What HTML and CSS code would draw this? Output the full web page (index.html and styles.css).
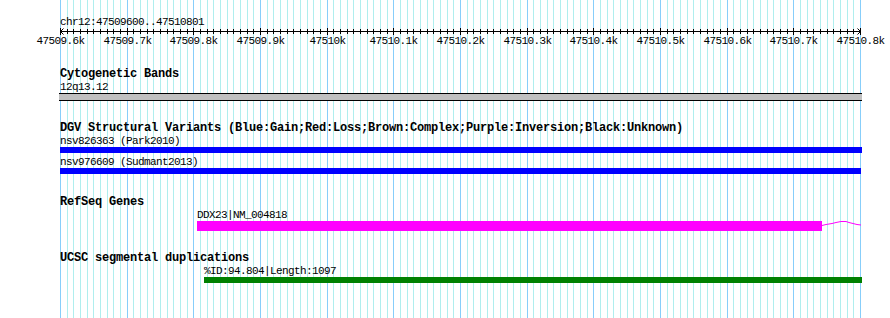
FILE: index.html
```html
<!DOCTYPE html>
<html lang="en">
<head>
  <meta charset="UTF-8">
  <meta name="viewport" content="width=device-width, initial-scale=1.0">
  <title>chr12:47509600..47510801</title>
  <link rel="stylesheet" href="styles.css">
</head>
<body>
  <div class="panel">
    <!-- background grid, filled in by the script below -->
    <svg class="grid" width="890" height="318"></svg>

    <svg class="ruler" width="890" height="47">
      <text class="ruler-text" x="60" y="25">chr12:47509600..47510801</text>
      <line class="axis" x1="60" y1="31.5" x2="861" y2="31.5"/>
      <polyline class="arrow" points="63.5,28.5 60.5,31.5 63.5,34.5"/>
      <polyline class="arrow" points="857.5,28.5 860.5,31.5 857.5,34.5"/>
      <g class="ticks"></g>
    </svg>

    <section class="track">
      <h2 class="track-title">Cytogenetic Bands</h2>
      <div class="feature">
        <div class="feature-label" style="margin-left:60px">12q13.12</div>
        <div class="bar bar-band" style="margin-left:59px;width:803px"></div>
      </div>
    </section>

    <section class="track">
      <h2 class="track-title">DGV Structural Variants (Blue:Gain;Red:Loss;Brown:Complex;Purple:Inversion;Black:Unknown)</h2>
      <div class="feature">
        <div class="feature-label" style="margin-left:60px">nsv826363 (Park2010)</div>
        <div class="bar bar-gain" style="margin-left:60px;width:802px"></div>
      </div>
      <div class="feature">
        <div class="feature-label" style="margin-left:60px">nsv976609 (Sudmant2013)</div>
        <div class="bar bar-gain" style="margin-left:60px;width:801px"></div>
      </div>
    </section>

    <section class="track track-genes">
      <h2 class="track-title">RefSeq Genes</h2>
      <div class="feature">
        <div class="feature-label" style="margin-left:197px">DDX23|NM_004818</div>
        <div class="gene-row">
          <div class="bar bar-exon" style="margin-left:197px;width:625px"></div>
          <svg class="intron" width="40" height="10">
            <polyline points="0,4.5 4,3.5 10,2.5 14,1.5 19,0.5 24,0.5 27,1.5 31,2.5 35,3.5 39,4"/>
          </svg>
        </div>
      </div>
    </section>

    <section class="track">
      <h2 class="track-title">UCSC segmental duplications</h2>
      <div class="feature">
        <div class="feature-label" style="margin-left:204px">%ID:94.804|Length:1097</div>
        <div class="bar bar-segdup" style="margin-left:204px;width:658px"></div>
      </div>
    </section>
  </div>

  <script>
    // Scale: 1200 bp shown across 800 px, starting at x = 60
    const NS = 'http://www.w3.org/2000/svg';
    const grid = document.querySelector('.grid');
    const ticks = document.querySelector('.ticks');
    const start = 47509600;
    const left = 60;
    const pxPerBp = 800 / 1200;

    function addLine(parent, cls, x, y1, y2) {
      const l = document.createElementNS(NS, 'line');
      l.setAttribute('class', cls);
      l.setAttribute('x1', x);
      l.setAttribute('x2', x);
      l.setAttribute('y1', y1);
      l.setAttribute('y2', y2);
      parent.appendChild(l);
    }

    for (let i = 0; i <= 120; i++) {
      const x = Math.round(left + i * 10 * pxPerBp) + 0.5;
      const major = i % 10 === 0;
      addLine(grid, major ? 'major' : 'minor', x, 0, 318);
      addLine(ticks, 'tick', x, major ? 28 : 29, major ? 35 : 34);

      if (major) {
        const t = document.createElementNS(NS, 'text');
        t.setAttribute('class', 'ruler-text');
        t.setAttribute('x', x);
        t.setAttribute('y', 44);
        t.setAttribute('text-anchor', 'middle');
        t.textContent = Number(((start + i * 10) / 1000).toFixed(1)) + 'k';
        ticks.appendChild(t);
      }
    }
  </script>
</body>
</html>
```

FILE: styles.css
```css
body {
  margin: 0;
  background: #fff;
}

.panel {
  position: relative;
  isolation: isolate;
  width: 890px;
  height: 318px;
  overflow: hidden;
  font-family: "Liberation Mono", "DejaVu Sans Mono", monospace;
  color: #000;
}

.grid {
  position: absolute;
  left: 0;
  top: 0;
  z-index: -1;
}

.grid line {
  stroke-width: 1;
  shape-rendering: crispEdges;
}

.grid .minor {
  stroke: #afeeee;
}

.grid .major {
  stroke: #87cefa;
}

.ruler {
  display: block;
}

.ruler-text {
  font-family: "Liberation Mono", monospace;
  font-size: 11px;
  letter-spacing: -0.6px;
  fill: #000;
}

.axis,
.tick {
  stroke: #000;
  stroke-width: 1;
  shape-rendering: crispEdges;
}

.arrow {
  stroke: #000;
  fill: none;
}

.track {
  margin-top: 21px;
}

.track-genes {
  margin-top: 22px;
}

.track-title {
  margin: 0;
  padding-left: 60px;
  font-size: 12px;
  line-height: 13px;
  font-weight: bold;
  letter-spacing: -0.2px;
  white-space: nowrap;
}

.feature + .feature {
  margin-top: 3px;
}

.feature-label {
  font-size: 11px;
  line-height: 12px;
  letter-spacing: -0.6px;
  white-space: nowrap;
}

.bar {
  height: 6px;
}

.bar-band {
  background: #c0c0c0;
  border-top: 1px solid #000;
  border-bottom: 1px solid #000;
}

.bar-gain {
  background: #0000ff;
}

.gene-row {
  display: flex;
  align-items: flex-start;
}

.bar-exon {
  height: 10px;
  background: #ff00ff;
}

.intron {
  display: block;
}

.intron polyline {
  stroke: #ff00ff;
  stroke-width: 1;
  fill: none;
}

.bar-segdup {
  background: #008000;
}
```
